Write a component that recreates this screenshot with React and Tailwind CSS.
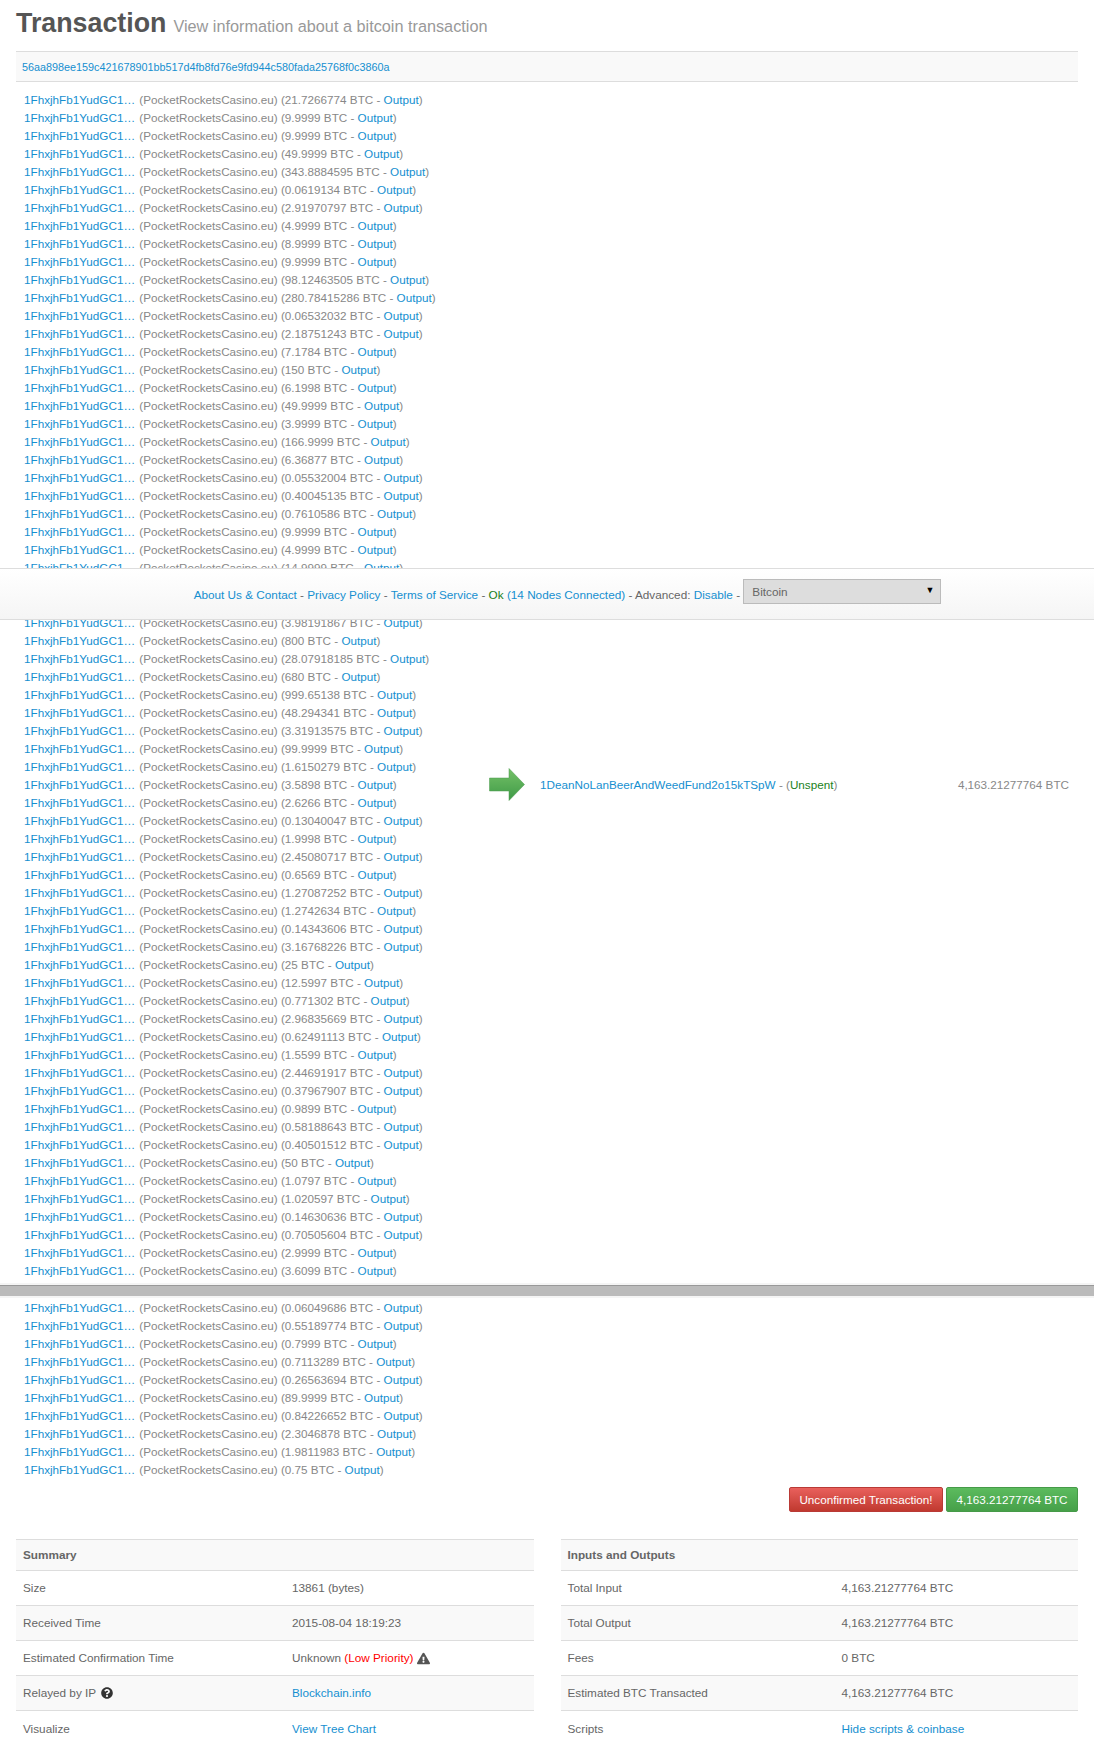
import { FaExclamationTriangle, FaQuestionCircle } from 'react-icons/fa';

// null = row that is fully covered by the footer bar
const firstInputs = [
    '21.7266774', '9.9999', '9.9999', '49.9999', '343.8884595', '0.0619134', '2.91970797', '4.9999', '8.9999', '9.9999',
    '98.12463505', '280.78415286', '0.06532032', '2.18751243', '7.1784', '150', '6.1998', '49.9999', '3.9999', '166.9999',
    '6.36877', '0.05532004', '0.40045135', '0.7610586', '9.9999', '4.9999', '14.9999', null, null, '3.98191867',
    '800', '28.07918185', '680', '999.65138', '48.294341', '3.31913575', '99.9999', '1.6150279', '3.5898', '2.6266',
    '0.13040047', '1.9998', '2.45080717', '0.6569', '1.27087252', '1.2742634', '0.14343606', '3.16768226', '25', '12.5997',
    '0.771302', '2.96835669', '0.62491113', '1.5599', '2.44691917', '0.37967907', '0.9899', '0.58188643', '0.40501512', '50',
    '1.0797', '1.020597', '0.14630636', '0.70505604', '2.9999', '3.6099',
];

const lastInputs = [
    '0.06049686', '0.55189774', '0.7999', '0.7113289', '0.26563694', '89.9999', '0.84226652', '2.3046878', '1.9811983', '0.75',
];

const link = 'text-[#158fd0]';

function InputRow({ amount }) {
    if (amount === null) return <div className="h-[18.5px]" />;
    return (
        <div className="h-[18px] leading-[18px] whitespace-nowrap">
            <a className={`${link} mr-[1px]`}>1FhxjhFb1YudGC1…</a> (PocketRocketsCasino.eu) ({amount} BTC - <a className={link}>Output</a>)
        </div>
    );
}

function InfoTable({ title, rows, labelCol }) {
    return (
        <div className="flex-1 text-[11.75px] text-[#666]">
            <div className="h-[32px] leading-[30px] px-[7px] bg-[#f9f9f9] border-y border-[#ddd] font-bold">{title}</div>
            {rows.map((row, i) => (
                <div key={i} className={`grid ${labelCol} h-[35px] items-center border-b border-[#ddd] last:border-b-0 px-[7px] ${i % 2 === 1 ? 'bg-[#f9f9f9]' : ''}`}>
                    <div className="flex items-center gap-[5px]">{row[0]}</div>
                    <div className="flex items-center">{row[1]}</div>
                </div>
            ))}
        </div>
    );
}

export default function App() {
    return (
        <div className="relative h-[1751px] overflow-hidden bg-white font-['Liberation_Sans',Arial,sans-serif] text-[11.7px] text-[#888]">
            <div className="px-[16px]">
                <div className="h-[51px] pt-[5px] flex items-baseline gap-[7px]">
                    <h1 className="text-[26.8px] leading-[36px] font-bold text-[#555]">Transaction</h1>
                    <span className="text-[16.25px] text-[#999]">View information about a bitcoin transaction</span>
                </div>

                <div className="h-[31px] leading-[30px] px-[6px] bg-[#f9f9f9] border-y border-[#ddd] text-[10.8px]">
                    <a className={link}>56aa898ee159c421678901bb517d4fb8fd76e9fd944c580fada25768f0c3860a</a>
                </div>

                <div className="flex items-center mt-[8.5px]">
                    <div className="w-[473px] pl-[8px]">
                        {firstInputs.map((amount, i) => <InputRow key={i} amount={amount} />)}
                        <div className="h-[19px]" />
                        {lastInputs.map((amount, i) => <InputRow key={i} amount={amount} />)}
                    </div>
                    <svg width="36" height="33" viewBox="0 0 36 33" className="shrink-0">
                        <defs>
                            <linearGradient id="arrowFill" x1="0" y1="0" x2="0" y2="1">
                                <stop offset="0" stopColor="#74c167" />
                                <stop offset="1" stopColor="#3f9a47" />
                            </linearGradient>
                        </defs>
                        <path d="M0.5 10H20V0.5L35.5 16.5L20 32.5V23H0.5Z" fill="url(#arrowFill)" stroke="#4a9a4c" strokeWidth="0.5" />
                    </svg>
                    <div className="ml-[15px] flex-1 flex justify-between pr-[9px]">
                        <span>
                            <a className={link}>1DeanNoLanBeerAndWeedFund2o15kTSpW</a> - (<span className="text-[#1a7f1a]">Unspent</span>)
                        </span>
                        <span>4,163.21277764 BTC</span>
                    </div>
                </div>

                <div className="flex justify-end gap-[3px] mt-[8.5px] text-white text-[11.7px]">
                    <div className="h-[25px] leading-[24px] w-[154px] text-center rounded-[2px] border border-[#b93a36] bg-gradient-to-b from-[#e9605c] to-[#c0392f]">Unconfirmed Transaction!</div>
                    <div className="h-[25px] leading-[24px] w-[132px] text-center rounded-[2px] border border-[#469a48] bg-gradient-to-b from-[#5cbb5e] to-[#46a049]">4,163.21277764 BTC</div>
                </div>

                <div className="flex gap-[27px] mt-[27px]">
                    <InfoTable
                        title="Summary"
                        labelCol="grid-cols-[269px_1fr]"
                        rows={[
                            ['Size', '13861 (bytes)'],
                            ['Received Time', '2015-08-04 18:19:23'],
                            ['Estimated Confirmation Time', (
                                <>
                                    Unknown&nbsp;<span className="text-[#f00]">(Low Priority)</span>
                                    <FaExclamationTriangle className="ml-[4px] text-[13px] text-[#555]" />
                                </>
                            )],
                            [<>Relayed by IP <FaQuestionCircle className="text-[12px] text-[#333]" /></>, <a className={link}>Blockchain.info</a>],
                            ['Visualize', <a className={link}>View Tree Chart</a>],
                        ]}
                    />
                    <InfoTable
                        title="Inputs and Outputs"
                        labelCol="grid-cols-[274px_1fr]"
                        rows={[
                            ['Total Input', '4,163.21277764 BTC'],
                            ['Total Output', '4,163.21277764 BTC'],
                            ['Fees', '0 BTC'],
                            ['Estimated BTC Transacted', '4,163.21277764 BTC'],
                            ['Scripts', <a className={link}>Hide scripts &amp; coinbase</a>],
                        ]}
                    />
                </div>
            </div>

            {/* grey separator across the whole page */}
            <div className="absolute left-0 right-0 top-[1283px] h-[15px] bg-[#f5f5f5] flex items-center">
                <div className="w-full h-[11px] bg-[#bbb] border-t border-[#999]" />
            </div>

            {/* sticky footer bar sits over the list */}
            <div className="absolute left-0 right-0 top-[568px] h-[52px] pl-[41px] border-y border-[#ddd] bg-gradient-to-b from-white to-[#f5f5f5] flex items-center justify-center text-[11.75px] text-[#666]">
                <span className="whitespace-pre mt-[1px]">
                    <a className={link}>About Us &amp; Contact</a> - <a className={link}>Privacy Policy</a> - <a className={link}>Terms of Service</a> - <span className="text-[#1a7f1a]">Ok</span> <a className={link}>(14 Nodes Connected)</a> - Advanced: <a className={link}>Disable</a> -{' '}
                </span>
                <div className="relative w-[198px] h-[25px] mb-[5px]">
                    <select className="appearance-none w-full h-full bg-[#ddd] border border-[#bbb] pl-[8px] text-[#666] outline-none">
                        <option>Bitcoin</option>
                    </select>
                    <span className="absolute right-[7px] top-[7px] text-[9px] leading-[9px] text-black pointer-events-none">▼</span>
                </div>
            </div>
        </div>
    );
}
